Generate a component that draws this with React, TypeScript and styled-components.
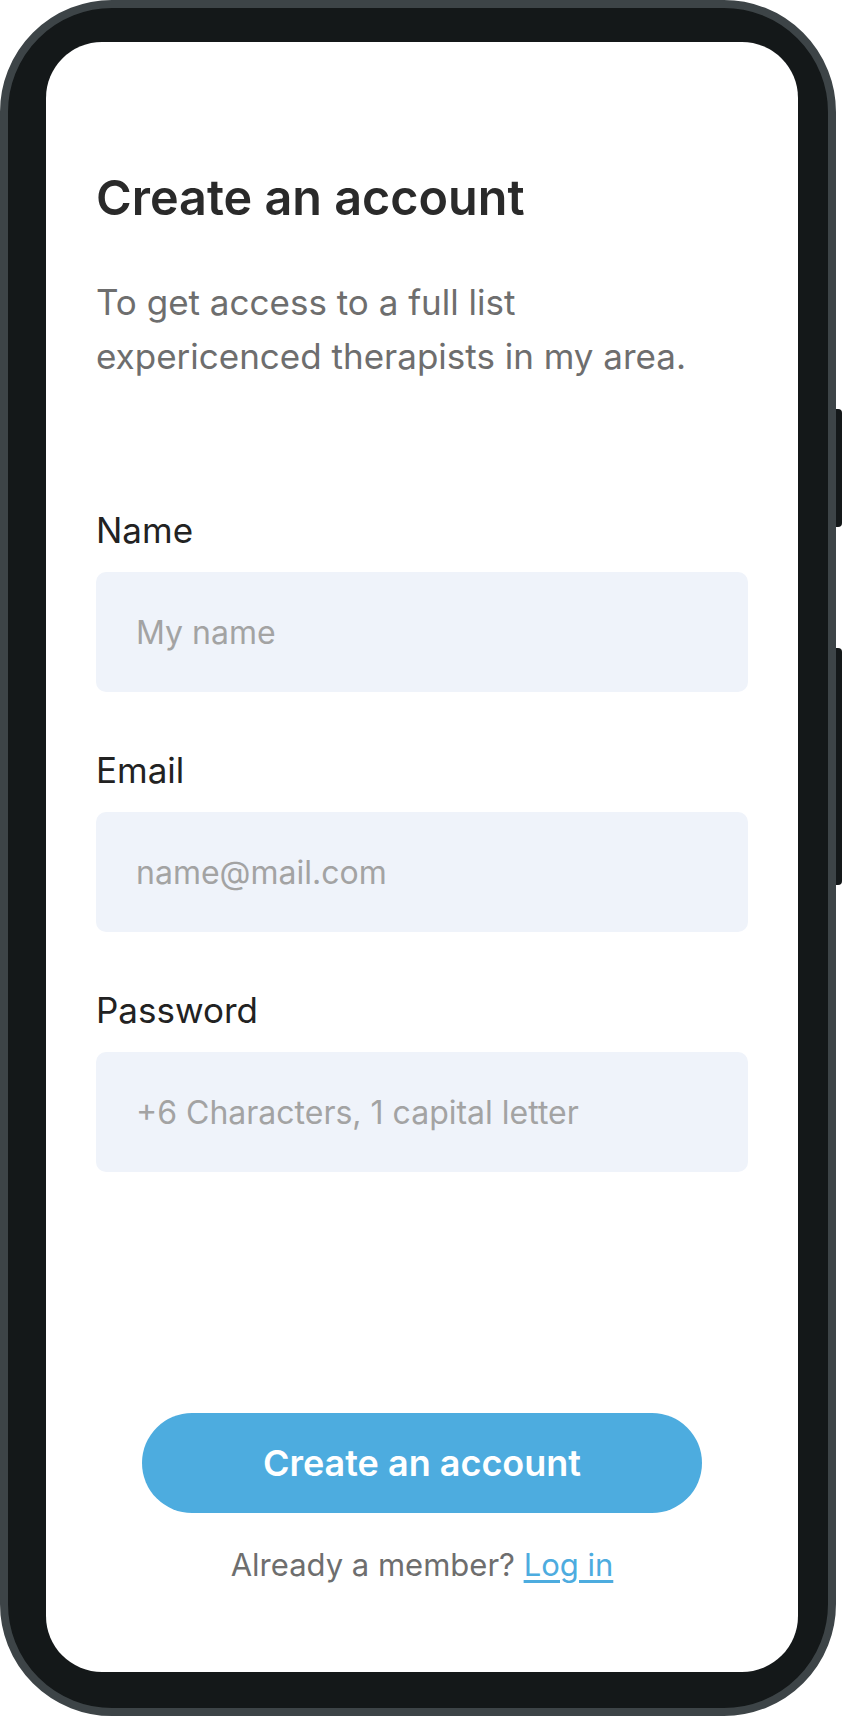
import React from "react";
import styled, { createGlobalStyle } from "styled-components";

const GlobalStyle = createGlobalStyle`
  html, body {
    margin: 0;
    padding: 0;
    background: #ffffff;
  }
  body {
    font-family: "Inter", "Noto Sans", sans-serif;
    -webkit-font-smoothing: antialiased;
  }
  * { box-sizing: border-box; }
`;

const Page = styled.div`
  width: 842px;
  height: 1716px;
  background: #ffffff;
`;

const Phone = styled.div`
  position: relative;
  width: 836px;
  height: 1716px;
  border: 8px solid #3d4447;
  background: #141819;
  border-radius: 112px;
  padding: 34px 30px 36px 38px;
  display: flex;
`;

const SideButton = styled.div<{ $top: number; $height: number }>`
  position: absolute;
  right: -14px;
  top: ${(p) => p.$top}px;
  width: 6px;
  height: ${(p) => p.$height}px;
  background: #141819;
  border-radius: 0 4px 4px 0;
`;

const Screen = styled.main`
  flex: 1;
  background: #ffffff;
  border-radius: 56px;
  padding: 127px 50px 90px;
  display: flex;
  flex-direction: column;
`;

const Title = styled.h1`
  margin: 0;
  font-size: 48.5px;
  line-height: 58px;
  font-weight: 600;
  color: #2a2a2a;
`;

const Subtitle = styled.p`
  margin: 48px 0 0;
  font-size: 35px;
  line-height: 54px;
  font-weight: 400;
  color: #6e6e6e;
  max-width: 620px;
`;

const Form = styled.form`
  margin-top: 128px;
  display: flex;
  flex-direction: column;
  gap: 59px;
`;

const Field = styled.label`
  display: flex;
  flex-direction: column;
  gap: 23px;
`;

const LabelText = styled.span`
  font-size: 35px;
  line-height: 38px;
  color: #222222;
`;

const Input = styled.input`
  height: 120px;
  width: 100%;
  border: none;
  outline: none;
  border-radius: 10px;
  background: #eff3fa;
  padding: 0 40px;
  font-family: inherit;
  font-size: 32px;
  color: #1f1f1f;
  &::placeholder {
    color: #a3a3a3;
  }
`;

const Bottom = styled.div`
  margin-top: auto;
  display: flex;
  flex-direction: column;
  align-items: center;
  gap: 35px;
`;

const PrimaryButton = styled.button`
  width: 560px;
  height: 100px;
  border: none;
  border-radius: 50px;
  background: #4dacdf;
  color: #ffffff;
  font-family: inherit;
  font-size: 36px;
  font-weight: 600;
  cursor: pointer;
`;

const Footer = styled.p`
  margin: 0;
  font-size: 31px;
  line-height: 34px;
  color: #6e6e6e;
`;

const LoginLink = styled.a`
  color: #4dacdf;
  text-decoration: underline;
  text-underline-offset: 4px;
`;

export default function App() {
  return (
    <Page>
      <GlobalStyle />
      <Phone>
        <SideButton $top={401} $height={118} />
        <SideButton $top={640} $height={237} />
        <Screen>
          <Title>Create an account</Title>
          <Subtitle>
            To get access to a full list expericenced therapists in my area.
          </Subtitle>
          <Form onSubmit={(e) => e.preventDefault()}>
            <Field>
              <LabelText>Name</LabelText>
              <Input type="text" placeholder="My name" />
            </Field>
            <Field>
              <LabelText>Email</LabelText>
              <Input type="email" placeholder="name@mail.com" />
            </Field>
            <Field>
              <LabelText>Password</LabelText>
              <Input type="password" placeholder="+6 Characters, 1 capital letter" />
            </Field>
          </Form>
          <Bottom>
            <PrimaryButton type="button">Create an account</PrimaryButton>
            <Footer>
              Already a member? <LoginLink href="#">Log in</LoginLink>
            </Footer>
          </Bottom>
        </Screen>
      </Phone>
    </Page>
  );
}
